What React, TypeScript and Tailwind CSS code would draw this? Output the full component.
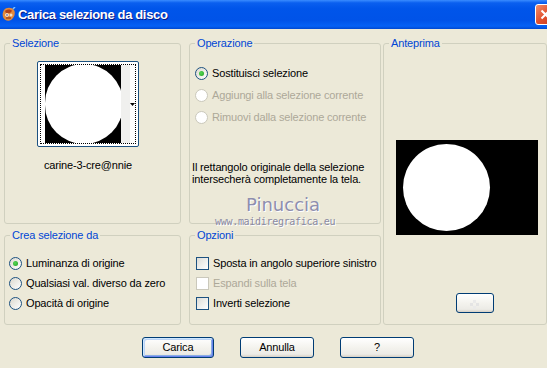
import { ReactNode } from "react"

function Radio({ label, checked, disabled }: { label: string; checked?: boolean; disabled?: boolean }) {
    return <div className="flex items-center h-[13px] gap-[4px] whitespace-nowrap">
        <span className={`w-[13px] h-[13px] rounded-full border flex items-center justify-center shrink-0 ${disabled ? "border-[#CAC8BB] bg-white" : "border-[#1C5180] bg-[linear-gradient(135deg,#DCD9CE,#FFFFFF)]"}`}>
            {checked && <span className="w-[5px] h-[5px] rounded-full bg-[radial-gradient(circle_at_40%_40%,#55D655,#21A121)]" />}
        </span>
        <span className={disabled ? "text-[#ACA899]" : "text-black"}>{label}</span>
    </div>
}

function Check({ label, disabled }: { label: string; disabled?: boolean }) {
    return <div className="flex items-center h-[13px] gap-[4px] whitespace-nowrap">
        <span className={`w-[13px] h-[13px] border shrink-0 ${disabled ? "border-[#CAC8BB] bg-white" : "border-[#1C5180] bg-[linear-gradient(135deg,#DCDCD7,#FFFFFF)]"}`} />
        <span className={disabled ? "text-[#ACA899]" : "text-black"}>{label}</span>
    </div>
}

function Group({ title, className, children }: { title: string; className: string; children?: ReactNode }) {
    return <fieldset className={`border border-[#D0D0BF] rounded-[3px] ${className}`}>
        <legend className="ml-[5px] px-[2px] leading-[13px] text-[#0046D5]">{title}</legend>
        {children}
    </fieldset>
}

function XpButton({ children, primary, className }: { children?: ReactNode; primary?: boolean; className?: string }) {
    return <div className={`border border-[#003C74] rounded-[3px] bg-[linear-gradient(180deg,#FFFFFF_0%,#F4F3EE_50%,#ECEBE6_85%,#D6D0C5_100%)] flex items-center justify-center text-black ${primary ? "shadow-[inset_1px_1px_0_#CEE7FF,inset_-1px_-1px_0_#6982EE,inset_2px_2px_0_#BCD4F6,inset_-2px_-2px_0_#89ADE4]" : ""} ${className ?? ""}`}>
        {children}
    </div>
}

export default function App() {
    return <div className="w-[547px] h-[368px] bg-[#ECE9D8] overflow-hidden font-['Liberation_Sans',Arial,sans-serif] text-[11px] tracking-[-0.15px]">
        {/* title bar */}
        <div className="w-[556px] h-[29px] flex items-center bg-[linear-gradient(180deg,#3A8CFF_0%,#0A5FEF_10%,#0055EA_30%,#0053E8_70%,#0561F5_90%,#0048D0_100%)]">
            <svg width="14" height="15" viewBox="0 0 14 15" className="ml-[2px] shrink-0">
                <path d="M2 3 C4 0 10 0 12 3 C14 6 12 11 9 13 C6 15 2 13 1 10 C0 7 1 5 2 3Z" fill="#E38A3C" />
                <path d="M3 4 C5 2 9 2 10 4 L8 6 L4 6Z" fill="#B4441A" />
                <circle cx="5" cy="8" r="1.8" fill="#FFFFFF" />
                <circle cx="9" cy="8" r="1.5" fill="#F4E2C8" />
                <circle cx="5" cy="8" r="0.8" fill="#2A2A6A" />
                <path d="M4 11 L9 11" stroke="#8A2A10" strokeWidth="1" />
                <path d="M11 2 L13 0" stroke="#7FC0FF" strokeWidth="1.5" />
            </svg>
            <span className="ml-[2px] text-white font-bold text-[13px] tracking-[-0.35px] [text-shadow:1px_1px_0_#0A1883] whitespace-nowrap">Carica selezione da disco</span>
            <div className="ml-auto w-[21px] h-[21px] shrink-0 rounded-[3px] border border-white bg-[linear-gradient(135deg,#F0906C,#E0512F_50%,#C8391A)] flex items-center justify-center">
                <svg width="11" height="11" viewBox="0 0 11 11">
                    <path d="M1.5 1.5 L9.5 9.5 M9.5 1.5 L1.5 9.5" stroke="white" strokeWidth="2" />
                </svg>
            </div>
        </div>

        {/* body */}
        <div className="flex pt-[8px] pl-[4px]">
            <div className="flex flex-col w-[177px] shrink-0">
                <Group title="Selezione" className="h-[187px]">
                    <div className="ml-[32px] w-[102px] mt-[11px] flex flex-col items-center">
                        <div className="w-[102px] h-[86px] border border-[#1C5180] rounded-[2px] bg-white p-[2px]">
                            <div className="h-full border border-dotted border-black flex pl-[4px]">
                                <div className="w-[78px] h-full bg-black overflow-hidden">
                                    <div className="w-[78px] h-[80px] -mt-[1px] rounded-full bg-white" />
                                </div>
                                <div className="w-[9px] h-full bg-[#F0F0EE]" />
                                <div className="flex items-center">
                                    <svg width="5" height="3" viewBox="0 0 5 3"><path d="M0 0 H5 L2.5 3Z" fill="black" /></svg>
                                </div>
                            </div>
                        </div>
                        <div className="mt-[10px] whitespace-nowrap text-black">carine-3-cre@nnie</div>
                    </div>
                </Group>
                <Group title="Crea selezione da" className="h-[96px] mt-[5px]">
                    <div className="ml-[4px] mt-[15px] flex flex-col gap-[7px]">
                        <Radio label="Luminanza di origine" checked />
                        <Radio label="Qualsiasi val. diverso da zero" />
                        <Radio label="Opacità di origine" />
                    </div>
                </Group>
            </div>

            <div className="flex flex-col w-[192px] shrink-0 ml-[8px]">
                <Group title="Operazione" className="h-[187px]">
                    <div className="ml-[5px] mt-[17px] flex flex-col gap-[9px]">
                        <Radio label="Sostituisci selezione" checked />
                        <Radio label="Aggiungi alla selezione corrente" disabled />
                        <Radio label="Rimuovi dalla selezione corrente" disabled />
                    </div>
                    <div className="ml-[2px] mt-[37px] leading-[12px] text-black whitespace-nowrap">
                        Il rettangolo originale della selezione<br />intersecherà completamente la tela.
                    </div>
                    <div className="mt-[11px] pl-[56px] text-[18px] leading-[18px] tracking-[0px] text-[#8E8EAE] [text-shadow:1px_1px_0_#FFFFFF] font-['DejaVu_Sans',sans-serif] whitespace-nowrap">Pinuccia</div>
                    <div className="pl-[25px] text-[10px] leading-[11px] mt-[2px] tracking-[-0.3px] text-[#8A8AA2] [text-shadow:1px_1px_0_#FFFFFF] font-['DejaVu_Sans_Mono',monospace] whitespace-nowrap">www.maidiregrafica.eu</div>
                </Group>
                <Group title="Opzioni" className="h-[96px] mt-[5px]">
                    <div className="ml-[6px] mt-[15px] flex flex-col gap-[7px]">
                        <Check label="Sposta in angolo superiore sinistro" />
                        <Check label="Espandi sulla tela" disabled />
                        <Check label="Inverti selezione" />
                    </div>
                </Group>
            </div>

            <Group title="Anteprima" className="h-[288px] w-[164px] shrink-0 ml-[2px]">
                <div className="ml-[12px] mt-[90px] w-[142px] h-[95px] bg-black pt-[4px] pl-[7px]">
                    <div className="w-[87px] h-[87px] rounded-full bg-white" />
                </div>
                <XpButton className="ml-[72px] mt-[58px] w-[38px] h-[20px]">
                    <svg width="30" height="12" viewBox="0 0 30 12">
                        <rect x="10" y="6" width="3" height="3" fill="#E4E4E4" />
                        <rect x="16" y="6" width="3" height="3" fill="#E4E4E4" />
                        <rect x="13" y="3" width="3" height="3" fill="#EAEAEA" />
                        <rect x="13" y="9" width="3" height="3" fill="#EAEAEA" />
                    </svg>
                </XpButton>
            </Group>
        </div>

        {/* buttons */}
        <div className="flex pl-[142px] gap-[26px] mt-[12px]">
            <XpButton primary className="w-[72px] h-[21px]">Carica</XpButton>
            <XpButton className="w-[74px] h-[21px]">Annulla</XpButton>
            <XpButton className="w-[74px] h-[21px]">?</XpButton>
        </div>
    </div>
}
